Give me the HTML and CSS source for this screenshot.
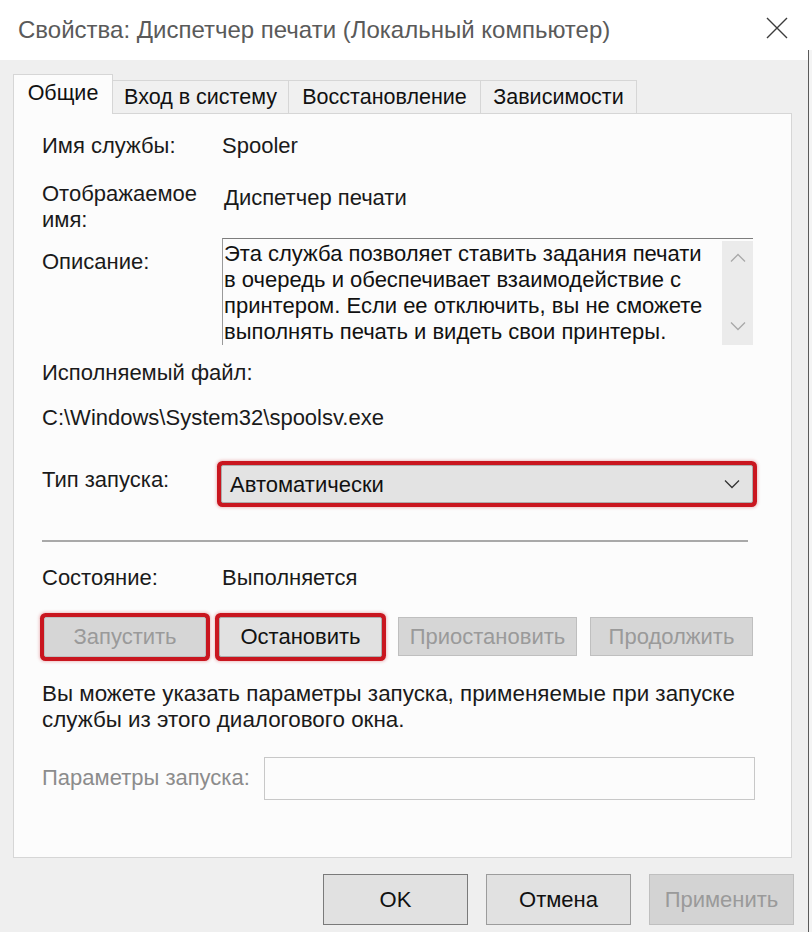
FILE: index.html
```html
<!DOCTYPE html>
<html lang="ru">
<head>
<meta charset="utf-8">
<title>Свойства: Диспетчер печати</title>
<link rel="stylesheet" href="styles.css">
</head>
<body>
<div class="screen">
  <div class="window">
    <div class="titlebar">
      <span class="title">Свойства: Диспетчер печати (Локальный компьютер)</span>
      <svg class="close" width="22" height="22" viewBox="0 0 22 22"><path d="M1 1 L21 21 M21 1 L1 21" stroke="#3c3c3c" stroke-width="1.4" fill="none"/></svg>
    </div>
    <div class="client">
      <div class="tabs">
        <div class="tab active t1">Общие</div>
        <div class="tab t2">Вход в систему</div>
        <div class="tab t3">Восстановление</div>
        <div class="tab t4">Зависимости</div>
      </div>
      <div class="panel">
        <div class="row r1">
          <div class="label">Имя службы:</div>
          <div class="value">Spooler</div>
        </div>
        <div class="row r2">
          <div class="label">Отображаемое<br>имя:</div>
          <div class="value v2">Диспетчер печати</div>
        </div>
        <div class="row r3">
          <div class="label l3">Описание:</div>
          <div class="desc">
            <div class="desc-text">Эта служба позволяет ставить задания печати в очередь и обеспечивает взаимодействие с принтером. Если ее отключить, вы не сможете выполнять печать и видеть свои принтеры.</div>
            <div class="scroll">
              <svg width="16" height="10" viewBox="0 0 16 10"><path d="M1 8.5 L8 1.5 L15 8.5" stroke="#a8a8a8" stroke-width="1.3" fill="none"/></svg>
              <svg width="16" height="10" viewBox="0 0 16 10"><path d="M1 1.5 L8 8.5 L15 1.5" stroke="#a8a8a8" stroke-width="1.3" fill="none"/></svg>
            </div>
          </div>
        </div>
        <div class="line exec">Исполняемый файл:</div>
        <div class="line path">C:\Windows\System32\spoolsv.exe</div>
        <div class="row r4">
          <div class="label l4">Тип запуска:</div>
          <div class="select marked">
            <span>Автоматически</span>
            <svg width="16" height="10" viewBox="0 0 16 10"><path d="M1 1.5 L8 8.5 L15 1.5" stroke="#333" stroke-width="1.3" fill="none"/></svg>
          </div>
        </div>
        <div class="sep"></div>
        <div class="row r5">
          <div class="label">Состояние:</div>
          <div class="value">Выполняется</div>
        </div>
        <div class="buttons">
          <div class="btn disabled marked b1">Запустить</div>
          <div class="btn marked b2">Остановить</div>
          <div class="btn disabled b3">Приостановить</div>
          <div class="btn disabled b4">Продолжить</div>
        </div>
        <div class="para">Вы можете указать параметры запуска, применяемые при запуске службы из этого диалогового окна.</div>
        <div class="row r6">
          <div class="label l6">Параметры запуска:</div>
          <div class="input"></div>
        </div>
      </div>
      <div class="footer">
        <div class="fbtn ok">OK</div>
        <div class="fbtn">Отмена</div>
        <div class="fbtn fdisabled">Применить</div>
      </div>
    </div>
  </div>
  <div class="behind"></div>
</div>
</body>
</html>
```

FILE: styles.css
```css
* { box-sizing: border-box; }
html, body { margin: 0; padding: 0; }
body {
  width: 812px;
  height: 932px;
  overflow: hidden;
  background: #ffffff;
  font-family: "Liberation Sans", Arial, sans-serif;
  color: #1a1a1a;
}
.screen { display: flex; }
.window { width: 808px; height: 932px; display: flex; flex-direction: column; }
.behind {
  width: 4px;
  margin-top: 50px;
  height: 882px;
  border-left: 1px solid #5a5a5a;
  background: #f4f4f4;
}
.titlebar {
  height: 60px;
  background: #ffffff;
  display: flex;
  align-items: center;
  justify-content: space-between;
  padding: 0 20px 0 18px;
}
.title { font-size: 24px; color: #5a5a5a; }
.close { margin-top: -4px; }
.client {
  flex: 1;
  background: #efefef;
  padding: 14px 0 0 13px;
}
.tabs { display: flex; height: 39px; align-items: flex-end; }
.tab {
  height: 33px;
  background: #f0f0f0;
  border: 1px solid #d6d6d6;
  border-bottom: none;
  border-left: none;
  font-size: 21.5px;
  line-height: 32px;
  color: #111;
  text-align: center;
}
.tab.active {
  height: 40px;
  margin-bottom: -1px;
  background: #fcfcfc;
  border-left: 1px solid #d6d6d6;
  position: relative;
  z-index: 1;
  line-height: 36px;
}
.t1 { width: 100px; }
.t2 { width: 176px; }
.t3 { width: 192px; }
.t4 { width: 156px; }
.panel {
  width: 779px;
  height: 745px;
  background: #fcfcfc;
  border: 1px solid #d6d6d6;
  padding: 19px 36px 0 28px;
  font-size: 22px;
  line-height: 26px;
}
.row { display: flex; align-items: flex-start; }
.label { width: 180px; flex: none; }
.r2 { margin-top: 22px; }
.v2 { margin-top: 4px; padding-left: 2px; }
.r3 { margin-top: 5px; }
.l3 { margin-top: 11px; }
.desc {
  width: 531px;
  height: 107px;
  border-top: 1px solid #7d7d7d;
  border-left: 1px solid #9a9a9a;
  padding-top: 2px;
  display: flex;
  background: #fcfcfc;
}
.desc-text { flex: 1; padding-left: 1px; padding-right: 14px; color: #111; }
.scroll {
  width: 31px;
  flex: none;
  background: #ebebeb;
  display: flex;
  flex-direction: column;
  justify-content: space-between;
  align-items: center;
  padding: 12px 0 14px;
}
.exec { margin-top: 15px; }
.path { margin-top: 19px; }
.r4 { margin-top: 34px; }
.l4 { width: 179px; margin-top: 2px; }
.select {
  width: 532px;
  height: 38px;
  background: #e3e3e3;
  border: 1px solid #adadad;
  display: flex;
  align-items: center;
  justify-content: space-between;
  padding: 2px 12px 0 8px;
  color: #111;
}
.select svg { margin-top: -2px; }
.marked {
  box-shadow: 0 0 0 4px #c9161f, 0 0 3px 5px rgba(201, 22, 31, 0.25);
  border-radius: 2px;
}
.sep {
  margin-top: 37px;
  width: 706px;
  height: 2px;
  background: #a9a9a9;
}
.r5 { margin-top: 23px; }
.buttons { display: flex; margin-top: 26px; padding-left: 2px; }
.btn {
  height: 40px;
  background: #e1e1e1;
  border: 1px solid #adadad;
  font-size: 22px;
  line-height: 38px;
  text-align: center;
  color: #111;
}
.btn.disabled { background: #d6d6d6; border-color: #bfbfbf; color: #9a9a9a; }
.b1 { width: 162px; }
.b2 { width: 163px; margin-left: 13px; }
.b3 { width: 179px; margin-left: 16px; height: 39px; }
.b4 { width: 163px; margin-left: 13px; height: 39px; }
.para { margin-top: 24px; width: 720px; font-size: 22.4px; }
.r6 { margin-top: 24px; }
.l6 { width: 222px; margin-top: 8px; color: #8c8c8c; }
.input {
  width: 491px;
  height: 43px;
  background: #fcfcfc;
  border: 1px solid #c8c8c8;
}
.footer {
  display: flex;
  justify-content: flex-end;
  gap: 18px;
  margin-top: 16px;
  padding-right: 14px;
}
.fbtn {
  width: 145px;
  height: 51px;
  background: #e1e1e1;
  border: 1px solid #9c9c9c;
  font-size: 22px;
  line-height: 49px;
  text-align: center;
  color: #111;
}
.fbtn.ok { border-color: #7a7a7a; }
.fbtn.fdisabled { background: #d3d3d3; border-color: #bfbfbf; color: #9a9a9a; }
```
